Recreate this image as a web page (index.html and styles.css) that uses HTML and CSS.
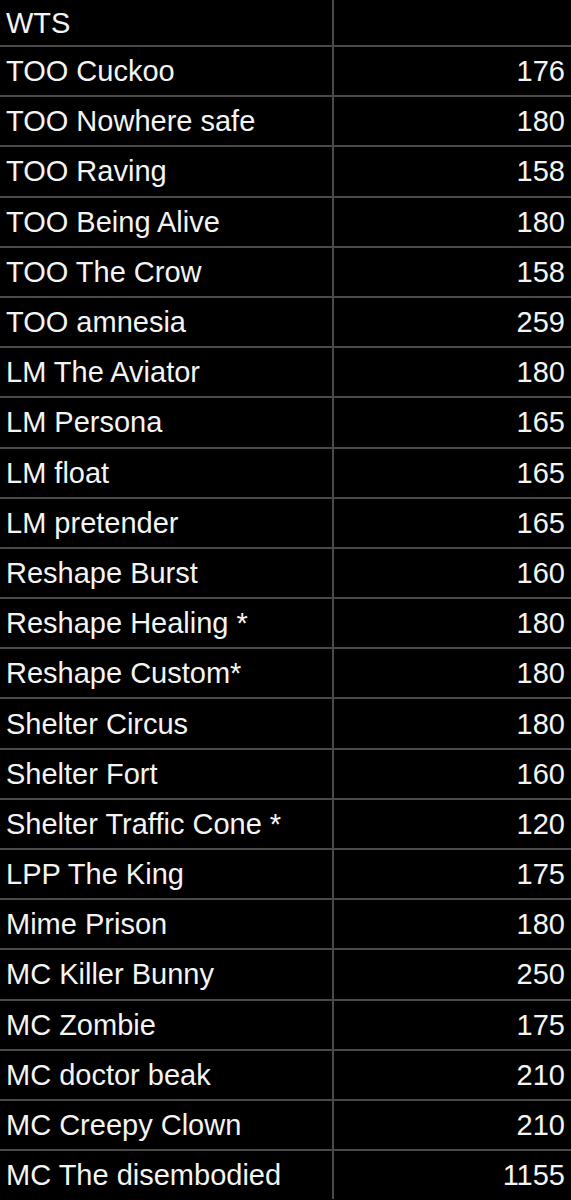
FILE: index.html
```html
<!DOCTYPE html>
<html lang="en">
<head>
  <meta charset="UTF-8" />
  <meta name="viewport" content="width=device-width, initial-scale=1.0" />
  <title>WTS</title>
  <link rel="stylesheet" href="styles.css">
</head>
<body>
  <div class="sheet">
    <div class="row head"><div class="name">WTS</div><div class="price"></div></div>
    <div class="row"><div class="name">TOO Cuckoo</div><div class="price">176</div></div>
    <div class="row"><div class="name">TOO Nowhere safe</div><div class="price">180</div></div>
    <div class="row"><div class="name">TOO Raving</div><div class="price">158</div></div>
    <div class="row"><div class="name">TOO Being Alive</div><div class="price">180</div></div>
    <div class="row"><div class="name">TOO The Crow</div><div class="price">158</div></div>
    <div class="row"><div class="name">TOO amnesia</div><div class="price">259</div></div>
    <div class="row"><div class="name">LM The Aviator</div><div class="price">180</div></div>
    <div class="row"><div class="name">LM Persona</div><div class="price">165</div></div>
    <div class="row"><div class="name">LM float</div><div class="price">165</div></div>
    <div class="row"><div class="name">LM pretender</div><div class="price">165</div></div>
    <div class="row"><div class="name">Reshape Burst</div><div class="price">160</div></div>
    <div class="row"><div class="name">Reshape Healing *</div><div class="price">180</div></div>
    <div class="row"><div class="name">Reshape Custom*</div><div class="price">180</div></div>
    <div class="row"><div class="name">Shelter Circus</div><div class="price">180</div></div>
    <div class="row"><div class="name">Shelter Fort</div><div class="price">160</div></div>
    <div class="row"><div class="name">Shelter Traffic Cone *</div><div class="price">120</div></div>
    <div class="row"><div class="name">LPP The King</div><div class="price">175</div></div>
    <div class="row"><div class="name">Mime Prison</div><div class="price">180</div></div>
    <div class="row"><div class="name">MC Killer Bunny</div><div class="price">250</div></div>
    <div class="row"><div class="name">MC Zombie</div><div class="price">175</div></div>
    <div class="row"><div class="name">MC doctor beak</div><div class="price">210</div></div>
    <div class="row"><div class="name">MC Creepy Clown</div><div class="price">210</div></div>
    <div class="row"><div class="name">MC The disembodied</div><div class="price">1155</div></div>
  </div>
</body>
</html>
```

FILE: styles.css
```css
body {
  margin: 0;
  padding: 0;
  background: #000;
  color: #f4f4f4;
  font-family: 'Liberation Sans', Arial, sans-serif;
  font-size: 29px;
}
.sheet {
  width: 571px;
  height: 1200px;
  overflow: hidden;
}
.row {
  display: grid;
  grid-template-columns: 332px 1fr;
  height: 50.2px;
  box-sizing: border-box;
  border-top: 2px solid #4a4a4a;
}
.row.head {
  height: 45px;
  border-top: none;
}
.name, .price {
  display: flex;
  align-items: center;
  padding-top: 1px;
  white-space: nowrap;
}
.name {
  padding-left: 6px;
}
.price {
  justify-content: flex-end;
  padding-right: 6px;
  border-left: 2px solid #4a4a4a;
}
```
